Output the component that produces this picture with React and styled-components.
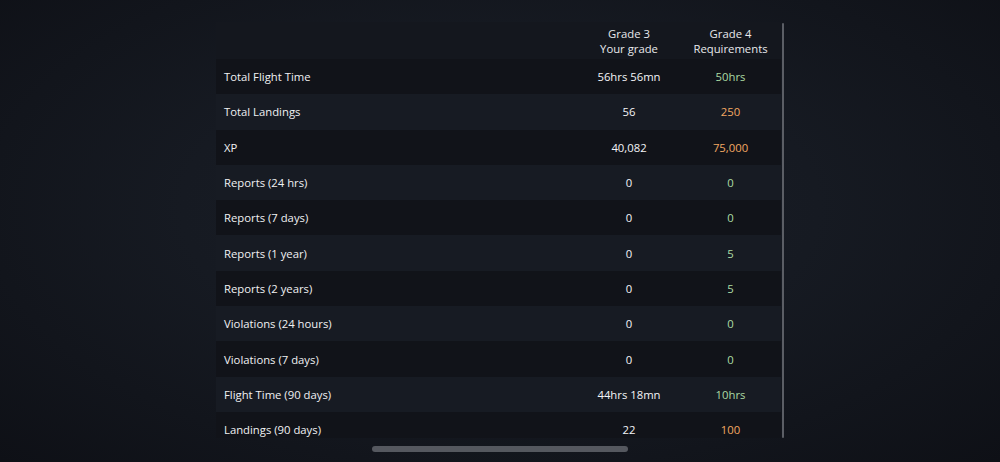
import React from 'react';
import styled, { createGlobalStyle } from 'styled-components';

const GlobalStyle = createGlobalStyle`
  html, body {
    margin: 0;
    padding: 0;
    width: 100%;
    height: 100%;
    overflow: hidden;
  }
  body {
    background: #12151c;
    font-family: "Open Sans", "Noto Sans", sans-serif;
  }
  #root {
    height: 100%;
  }
`;

const Screen = styled.div`
  width: 100vw;
  height: 100vh;
  display: flex;
  flex-direction: column;
  align-items: center;
  background: radial-gradient(ellipse at 50% 45%, #1b1f28 0%, #161a22 45%, #0e1016 100%);
  box-sizing: border-box;
  padding-top: 22px;
`;

const Panel = styled.div`
  display: flex;
  gap: 1px;
  height: 416px;
`;

const TableArea = styled.div`
  width: 565px;
  overflow: hidden;
`;

const ScrollTrack = styled.div`
  width: 2px;
  margin-top: 1px;
  background: #5b5e65;
  border-radius: 1px;
`;

const HeaderRow = styled.div`
  display: grid;
  grid-template-columns: 1fr 102px 101px;
  height: 37px;
  align-items: center;
  background: #14171e;
  color: #e8e9ec;
  font-size: 11.3px;
  line-height: 15px;
  text-align: center;
`;

const Row = styled.div`
  display: grid;
  grid-template-columns: 1fr 102px 101px;
  height: 35.3px;
  align-items: center;
  background: ${p => (p.$alt ? '#171b23' : '#111319')};
  font-size: 11.3px;
`;

const Label = styled.div`
  padding-left: 8px;
  color: #f0f1f3;
`;

const Value = styled.div`
  text-align: center;
  color: #f4f5f7;
`;

const Requirement = styled.div`
  text-align: center;
  color: ${p => (p.$met ? '#acdca4' : '#f2a862')};
`;

const HomeBar = styled.div`
  width: 256px;
  height: 6px;
  border-radius: 3px;
  background: #55585f;
  margin-top: 8px;
`;

const rows = [
  { label: 'Total Flight Time', mine: '56hrs 56mn', req: '50hrs', met: true },
  { label: 'Total Landings', mine: '56', req: '250', met: false },
  { label: 'XP', mine: '40,082', req: '75,000', met: false },
  { label: 'Reports (24 hrs)', mine: '0', req: '0', met: true },
  { label: 'Reports (7 days)', mine: '0', req: '0', met: true },
  { label: 'Reports (1 year)', mine: '0', req: '5', met: true },
  { label: 'Reports (2 years)', mine: '0', req: '5', met: true },
  { label: 'Violations (24 hours)', mine: '0', req: '0', met: true },
  { label: 'Violations (7 days)', mine: '0', req: '0', met: true },
  { label: 'Flight Time (90 days)', mine: '44hrs 18mn', req: '10hrs', met: true },
  { label: 'Landings (90 days)', mine: '22', req: '100', met: false },
];

export default function App() {
  return (
    <Screen>
      <GlobalStyle />
      <Panel>
        <TableArea>
          <HeaderRow>
            <div />
            <div>Grade 3<br />Your grade</div>
            <div>Grade 4<br />Requirements</div>
          </HeaderRow>
          {rows.map((r, i) => (
            <Row key={r.label} $alt={i % 2 === 1}>
              <Label>{r.label}</Label>
              <Value>{r.mine}</Value>
              <Requirement $met={r.met}>{r.req}</Requirement>
            </Row>
          ))}
        </TableArea>
        <ScrollTrack />
      </Panel>
      <HomeBar />
    </Screen>
  );
}
